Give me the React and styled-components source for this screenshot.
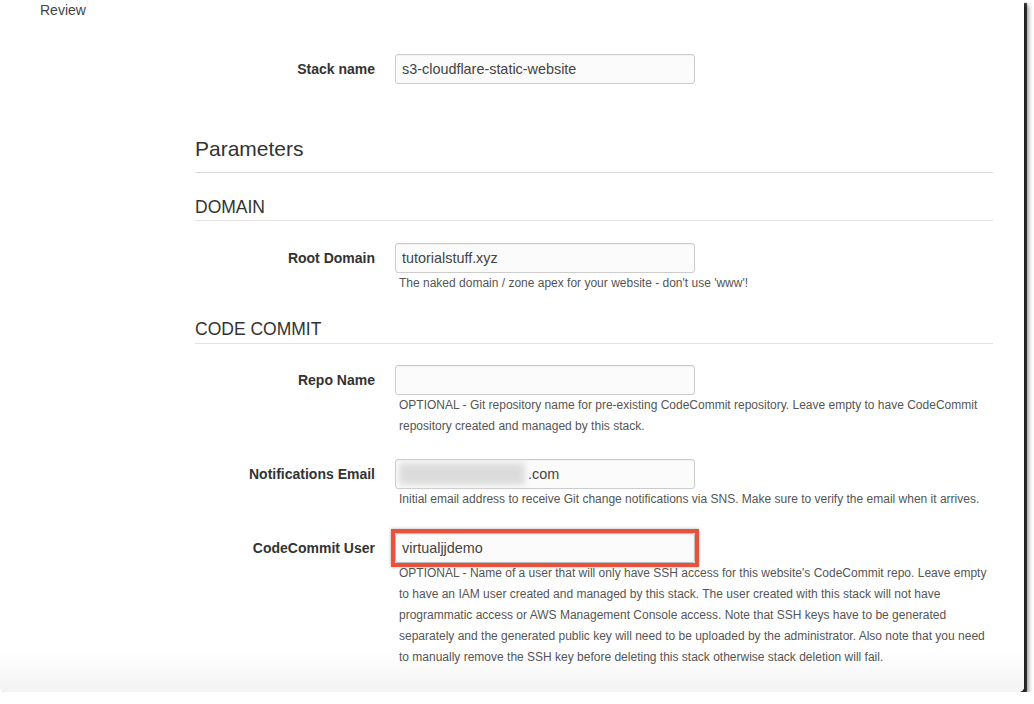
import React from "react"
import styled, { createGlobalStyle } from "styled-components"

const GlobalStyle = createGlobalStyle`
  html, body {
    margin: 0;
    padding: 0;
    background: #fff;
  }
  body {
    font-family: "Liberation Sans", Arial, Helvetica, sans-serif;
    color: #333;
  }
`

const Frame = styled.div`
  width: 1024px;
  height: 692px;
  display: flex;
  overflow: hidden;
  border-radius: 0 0 5px 5px;
  background: linear-gradient(to bottom, #fff 0, #fff 94%, #f3f3f3 100%);
  box-shadow: 3px 3px 1px rgba(0, 0, 0, 0.8), 5px 5px 4px rgba(0, 0, 0, 0.35);
`

const Sidebar = styled.nav`
  width: 195px;
  flex-shrink: 0;
  box-sizing: border-box;
  padding: 2px 0 0 40px;
`

const NavItem = styled.div`
  font-size: 14px;
  line-height: 16px;
  color: #444;
`

const Main = styled.main`
  flex: 1;
  box-sizing: border-box;
  padding: 54px 31px 0 0;
  display: flex;
  flex-direction: column;
`

const Row = styled.div`
  display: grid;
  grid-template-columns: 180px 300px 1fr;
  column-gap: 20px;
  margin-top: ${(p) => p.$top || 0}px;
`

const Label = styled.label`
  padding-top: 1px;
  font-size: 14px;
  font-weight: bold;
  line-height: 29px;
  color: #333;
  text-align: right;
`

const Field = styled.div`
  position: relative;
  height: 30px;
  box-sizing: border-box;
  display: flex;
  align-items: center;
  padding: 0 6px;
  border: 1px solid #cbcbcb;
  border-radius: 3px;
  background: #fbfbfb;
  box-shadow: inset 0 1px 1px rgba(0, 0, 0, 0.04);
  font-size: 14.4px;
  color: #444;
  white-space: nowrap;
  ${(p) =>
    p.$marked &&
    `
    &::after {
      content: "";
      position: absolute;
      inset: -5px -5px -5px -5px;
      border: 4px solid #e8523d;
      box-shadow: 0 0 3px rgba(0, 0, 0, 0.3), inset 0 0 2px rgba(0, 0, 0, 0.25);
      pointer-events: none;
    }
  `}
`

const Blurred = styled.span`
  display: inline-block;
  width: 126px;
  height: 22px;
  margin: 0 3px 0 -3px;
  background: #dcdcdc;
  filter: blur(3px);
`

const Help = styled.div`
  grid-column: 2 / 4;
  padding-left: 4px;
  font-size: 12px;
  line-height: 21px;
  color: #555;
`

const Line = styled.span`
  display: block;
  white-space: nowrap;
`

const Heading = styled.h2`
  margin: ${(p) => p.$top}px 0 0;
  padding-bottom: 11px;
  border-bottom: 1px solid #dcdcdc;
  font-size: 21px;
  font-weight: normal;
  line-height: 24px;
  color: #333;
`

const SubHeading = styled.h3`
  margin: ${(p) => p.$top}px 0 0;
  padding-bottom: ${(p) => p.$pad}px;
  border-bottom: 1px solid #e2e2e2;
  font-size: 17.5px;
  font-weight: normal;
  line-height: 20px;
  color: #333;
`

function FormRow({ label, top, marked, children, help }) {
  return (
    <Row $top={top}>
      <Label>{label}</Label>
      <Field $marked={marked}>{children}</Field>
      <div />
      {help && (
        <Help>
          {help.map((l) => (
            <Line key={l}>{l}</Line>
          ))}
        </Help>
      )}
    </Row>
  )
}

export default function App() {
  return (
    <>
      <GlobalStyle />
      <Frame>
        <Sidebar>
          <NavItem>Review</NavItem>
        </Sidebar>
        <Main>
          <FormRow label="Stack name">s3-cloudflare-static-website</FormRow>

          <Heading $top={53}>Parameters</Heading>

          <SubHeading $top={24} $pad={3}>
            DOMAIN
          </SubHeading>
          <FormRow
            label="Root Domain"
            top={22}
            help={["The naked domain / zone apex for your website - don't use 'www'!"]}
          >
            tutorialstuff.xyz
          </FormRow>

          <SubHeading $top={25} $pad={4}>
            CODE COMMIT
          </SubHeading>
          <FormRow
            label="Repo Name"
            top={21}
            help={[
              "OPTIONAL - Git repository name for pre-existing CodeCommit repository. Leave empty to have CodeCommit",
              "repository created and managed by this stack.",
            ]}
          />
          <FormRow
            label="Notifications Email"
            top={22}
            help={[
              "Initial email address to receive Git change notifications via SNS. Make sure to verify the email when it arrives.",
            ]}
          >
            <Blurred />
            .com
          </FormRow>
          <FormRow
            label="CodeCommit User"
            top={23}
            marked
            help={[
              "OPTIONAL - Name of a user that will only have SSH access for this website's CodeCommit repo. Leave empty",
              "to have an IAM user created and managed by this stack. The user created with this stack will not have",
              "programmatic access or AWS Management Console access. Note that SSH keys have to be generated",
              "separately and the generated public key will need to be uploaded by the administrator. Also note that you need",
              "to manually remove the SSH key before deleting this stack otherwise stack deletion will fail.",
            ]}
          >
            virtualjjdemo
          </FormRow>
        </Main>
      </Frame>
    </>
  )
}
